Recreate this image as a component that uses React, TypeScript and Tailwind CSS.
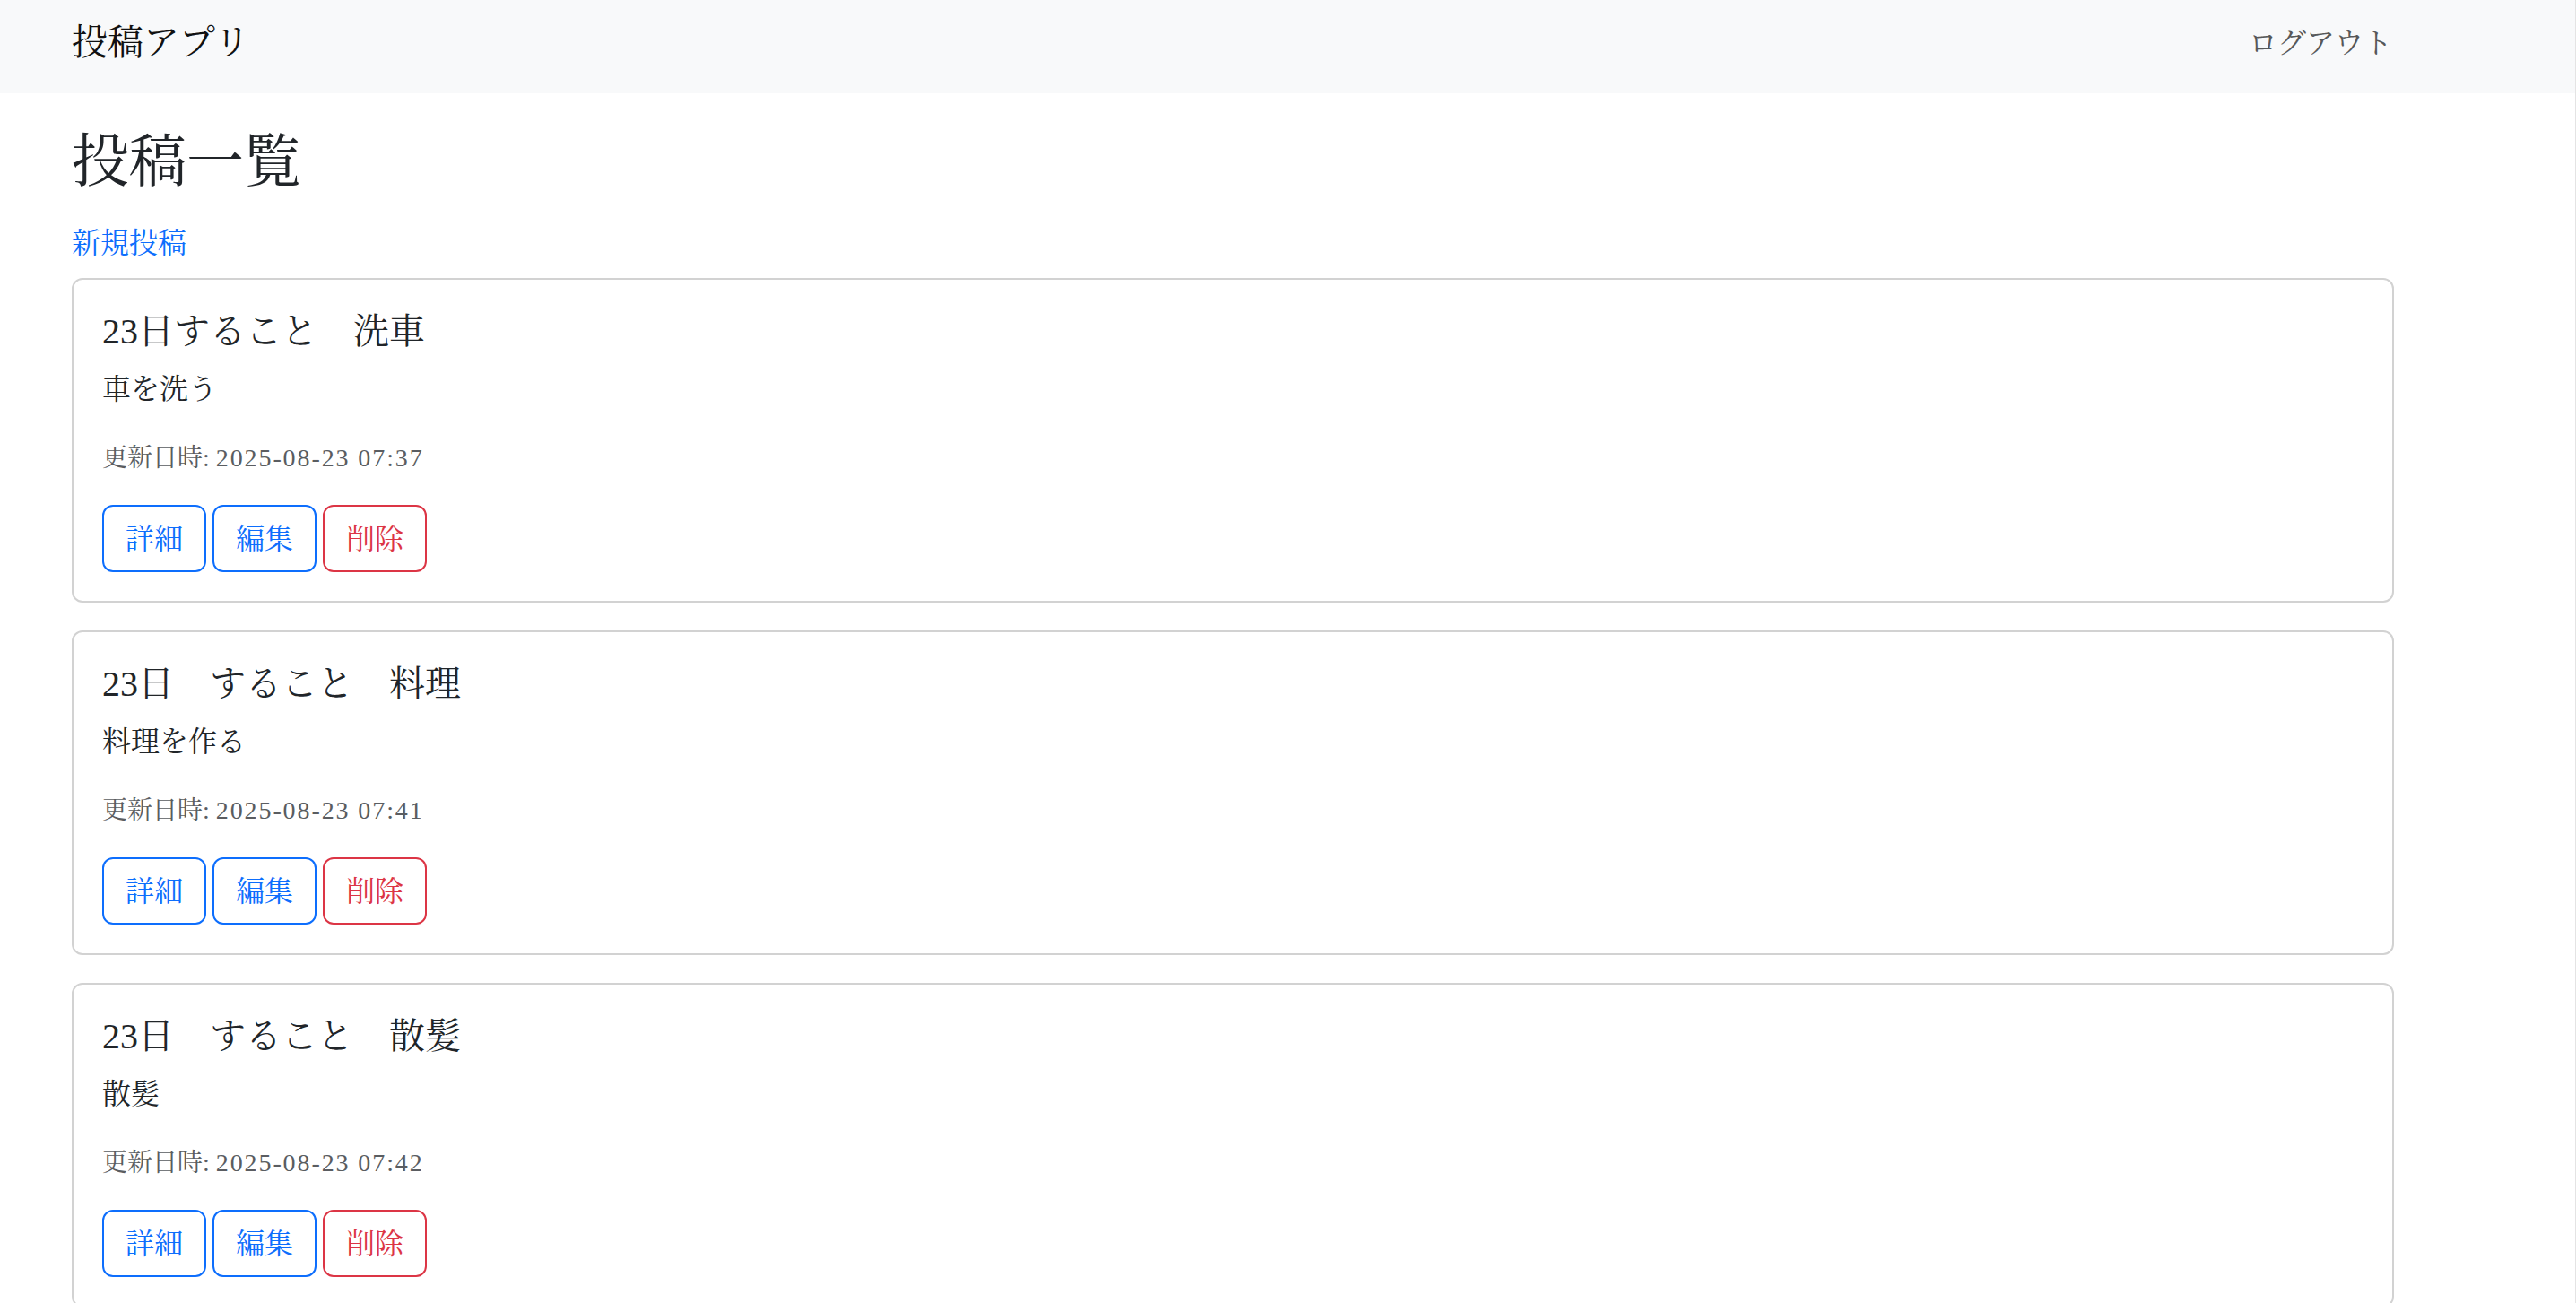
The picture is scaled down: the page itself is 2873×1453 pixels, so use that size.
const posts = [
  { title: "23日すること　洗車", body: "車を洗う", updated: "2025-08-23 07:37" },
  { title: "23日　すること　料理", body: "料理を作る", updated: "2025-08-23 07:41" },
  { title: "23日　すること　散髪", body: "散髪", updated: "2025-08-23 07:42" },
];

function PostCard({ title, body, updated }: { title: string; body: string; updated: string }) {
  return (
    <div className="rounded-[12px] border-2 border-[#d2d2d2] bg-white px-[32px] pt-[34px] pb-[32px]">
      <h5 className="text-[40px] leading-[48px] text-[#212529] mb-[16px]">{title}</h5>
      <p className="text-[32px] leading-[48px] text-[#212529] mb-[32px]">{body}</p>
      <p className="text-[28px] leading-[42px] text-[#5a5d61] mb-[31px]">
        更新日時: <span className="tracking-[1.9px]">{updated}</span>
      </p>
      <div className="flex gap-[7px]">
        <button className="h-[75px] px-[24px] border-2 border-[#0d6efd] text-[#0d6efd] rounded-[12px] text-[32px] leading-[48px] bg-white">
          詳細
        </button>
        <button className="h-[75px] px-[24px] border-2 border-[#0d6efd] text-[#0d6efd] rounded-[12px] text-[32px] leading-[48px] bg-white">
          編集
        </button>
        <button className="h-[75px] px-[24px] border-2 border-[#dc3545] text-[#dc3545] rounded-[12px] text-[32px] leading-[48px] bg-white">
          削除
        </button>
      </div>
    </div>
  );
}

export default function App() {
  return (
    <div className="h-screen overflow-hidden bg-white border-r border-[#e4e4e4] font-['Liberation_Serif','Noto_Serif_CJK_JP','Noto_Sans_CJK_JP',serif]">
      <header className="h-[104px] bg-[#f8f9fa]">
        <div className="w-[2590px] ml-[80px] flex justify-between items-center pt-[24px]">
          <span className="text-[40px] leading-[48px] text-[#111111]">投稿アプリ</span>
          <span className="text-[32px] leading-[48px] text-[#575859] mr-[2px]">ログアウト</span>
        </div>
      </header>
      <main className="w-[2590px] ml-[80px] pt-[38px]">
        <h2 className="text-[64px] leading-[77px] text-[#212529]">投稿一覧</h2>
        <a href="#" className="block w-fit mt-[28px] text-[32px] leading-[48px] text-[#0d6efd]">
          新規投稿
        </a>
        <div className="mt-[15px] flex flex-col gap-[31px]">
          {posts.map((p) => (
            <PostCard key={p.updated} title={p.title} body={p.body} updated={p.updated} />
          ))}
        </div>
      </main>
    </div>
  );
}
